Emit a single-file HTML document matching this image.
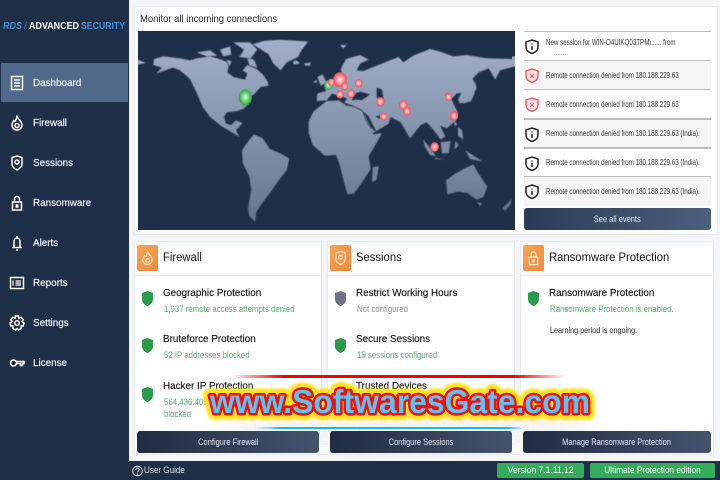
<!DOCTYPE html>
<html><head><meta charset="utf-8">
<style>
*{box-sizing:border-box;margin:0;padding:0}
html,body{width:720px;height:480px;overflow:hidden;background:#1f2f47;font-family:"Liberation Sans",sans-serif}
.a{position:absolute}
#main{left:129px;top:0;width:591px;height:461px;background:#f3f5f7}
.panel{position:absolute;background:#fff;border:1px solid #e8ebee}
.nav{position:absolute;left:33px;color:#eef2f6;font-size:10.5px;line-height:14px;white-space:nowrap;transform:scaleX(.94);transform-origin:left;-webkit-text-stroke:.2px #eef2f6}
.ni{position:absolute;left:9px;width:16px;height:16px;fill:none;stroke:#fff;stroke-width:1.5}
.ev{position:absolute;left:524px;width:187px;height:29px;border-top:1px solid #bdbdbd;font-size:8px;color:#333;line-height:29px;padding-left:22px;white-space:nowrap;overflow:hidden}
.ev span{display:inline-block;transform:scaleX(.775);transform-origin:left}
.ev svg{position:absolute;left:1px;top:7px;width:14px;height:15px}
.btn{position:absolute;height:22px;border-radius:3px;color:#e3e7ee;font-size:9px;line-height:22px;text-align:center;background:linear-gradient(90deg,#1f2c42,#46536d)}
.btn span{display:inline-block;transform:scaleX(.83)}
.h{position:absolute;font-size:11.5px;color:#111;white-space:nowrap;transform:scaleX(.98);transform-origin:left}
.t{position:absolute;font-size:10.5px;color:#111;white-space:nowrap;line-height:13px;transform:scaleX(.94);transform-origin:left;-webkit-text-stroke:.15px #111}
.s{position:absolute;font-size:9px;color:#5aa674;white-space:nowrap;line-height:12px;transform:scaleX(.87);transform-origin:left}
.ic{position:absolute;width:21px;height:26px;border-radius:2px;background:linear-gradient(135deg,#f9a350,#ef8a3f)}
.ic svg{position:absolute;left:3px;top:5px;width:15px;height:16px;fill:none;stroke:#fde7cf;stroke-width:1.3}
.sh{position:absolute;width:11px;height:15px}
</style></head><body>
<svg width="0" height="0" style="position:absolute"><defs>
<path id="sd" d="M5.5 0 L11 2 V8 C11 12 8 14 5.500 15 C3 14 0 12 0 8 V2 Z"/>
<path id="shp" d="M7 1 L13 3 V8 C13 11.500 10 13.500 7 14.500 C4 13.500 1 11.500 1 8 V3 Z"/>
<radialGradient id="rd"><stop offset="0" stop-color="#ffecec"/><stop offset=".5" stop-color="#ff9499"/><stop offset=".88" stop-color="#f2555f"/><stop offset="1" stop-color="#e8505c" stop-opacity=".5"/></radialGradient>
<radialGradient id="gr"><stop offset="0" stop-color="#e6ffe6"/><stop offset=".5" stop-color="#74d878"/><stop offset=".88" stop-color="#36b04a"/><stop offset="1" stop-color="#36b04a" stop-opacity=".5"/></radialGradient>
<linearGradient id="land" gradientUnits="userSpaceOnUse" x1="0" y1="120" x2="0" y2="660"><stop offset="0" stop-color="#a2afc6"/><stop offset=".5" stop-color="#8593ad"/><stop offset="1" stop-color="#67768f"/></linearGradient>
<filter id="noise" x="0" y="0" width="100%" height="100%"><feTurbulence type="fractalNoise" baseFrequency="1.2" numOctaves="1" seed="4"/><feColorMatrix values="0 0 0 0 .55  0 0 0 0 .55  0 0 0 0 .55  1.6 0 0 0 -.35"/></filter>
<filter id="sm" x="0" y="0" width="100%" height="100%"><feGaussianBlur stdDeviation="1.8"/></filter>
</defs></svg>

<!-- Sidebar -->
<svg class="a" style="left:0;top:16px" width="130" height="18" font-family="Liberation Sans" font-weight="bold" font-size="10.500">
<text x="3" y="13" textLength="19" lengthAdjust="spacingAndGlyphs" fill="#4a90d9" font-style="italic">RDS</text>
<text x="24" y="13" fill="#4a90d9" font-weight="normal">/</text>
<text x="29" y="13" textLength="50" lengthAdjust="spacingAndGlyphs" fill="#fff">ADVANCED</text>
<text x="81" y="13" textLength="44" lengthAdjust="spacingAndGlyphs" fill="#4a90d9">SECURITY</text>
</svg>
<div class="a" style="left:1px;top:63px;width:127px;height:39px;background:#51698a"></div>

<svg class="ni" style="top:75px" viewBox="0 0 16 16"><rect x="2.500" y="1.500" width="11" height="13"/><path d="M5 5h6M5 8h6M5 11h6"/></svg>
<div class="nav" style="top:76px">Dashboard</div>
<svg class="ni" style="top:115px" viewBox="0 0 16 16"><path d="M8 1.500 C9 4 13 6 13 10 A5 5 0 0 1 3 10 C3 8 4 7 5 5.500 C6 7 7 6 8 1.500Z"/><circle cx="8" cy="10.500" r="2"/></svg>
<div class="nav" style="top:116px">Firewall</div>
<svg class="ni" style="top:155px" viewBox="0 0 16 16"><path d="M8 1 L13 2.500 V9 C13 12 10 14 8 15 C6 14 3 12 3 9 V2.500 Z"/><circle cx="8" cy="7" r="2"/></svg>
<div class="nav" style="top:156px">Sessions</div>
<svg class="ni" style="top:195px" viewBox="0 0 16 16"><rect x="3.500" y="7" width="9" height="8"/><path d="M5.500 7 V4 A2.500 2.500 0 0 1 10.500 4 V7"/><rect x="7.300" y="10" width="1.400" height="2" fill="#fff"/></svg>
<div class="nav" style="top:196px">Ransomware</div>
<svg class="ni" style="top:235px" viewBox="0 0 16 16"><path d="M8 1 V3 M5 12 V6.500 A3 3.500 0 0 1 11 6.500 V12 M3 12.500 H13 M7 15 H9"/></svg>
<div class="nav" style="top:236px">Alerts</div>
<svg class="ni" style="top:275px" viewBox="0 0 16 16"><rect x="1.500" y="2.500" width="13" height="11"/><path d="M4 5.500V10.500M6.500 6H12M6.500 8H12M6.500 10H12" stroke-width="1.200"/></svg>
<div class="nav" style="top:276px">Reports</div>
<svg class="ni" style="top:315px" viewBox="0 0 16 16"><path d="M6.500 1 H9.500 L10 3.300 L12.200 2.300 L14.200 4.800 L12.800 6.500 L15 8 L14.200 11 L12.300 10.800 L12 13.500 L9.500 15 L8 13.500 L6.500 15 L4 13.500 L3.700 10.800 L1.800 11 L1 8 L3.200 6.500 L1.800 4.800 L3.800 2.300 L6 3.300 Z"/><circle cx="8" cy="8" r="2.300"/></svg>
<div class="nav" style="top:316px">Settings</div>
<svg class="ni" style="top:355px" viewBox="0 0 16 16"><circle cx="4.500" cy="8" r="3"/><path d="M7.500 6.500 H15 V8.500 H13.500 V10.500 H11.500 V8.500 H7.500"/></svg>
<div class="nav" style="top:356px">License</div>

<!-- Main -->
<div class="a" id="main"></div>
<div class="panel" style="left:134px;top:6px;width:584px;height:229px"></div>
<div class="a" style="left:140px;top:12px;font-size:10.5px;color:#222;line-height:14px;white-space:nowrap;transform:scaleX(.9);transform-origin:left">Monitor all incoming connections</div>

<!-- Map -->
<svg class="a" style="left:138px;top:31px" width="377" height="199" viewBox="24 94 1131 597">
<rect x="24" y="94" width="1131" height="597" fill="#1f2f47"/>
<g fill="url(#land)" filter="url(#sm)">
<path d="M24 180 L48 190 L24 195Z"/>
<path d="M72 178 L100 170 L150 176 L180 182 L200 176 L240 170 L262 176 L290 186 L296 200 L292 218 L310 232 L345 240 L352 222 L338 212 L352 196 L380 208 L398 224 L412 244 L416 258 L392 262 L372 284 L360 292 L354 314 L340 328 L322 334 L290 338 L282 352 L288 372 L304 376 L318 362 L338 370 L318 392 L328 412 L302 396 L272 378 L240 352 L218 322 L200 280 L180 238 L150 212 L128 204 L105 212 L78 222 L96 204 L70 196Z"/>
<path d="M200 158 L240 152 L262 168 L230 170Z M270 150 L300 140 L304 165 L280 170Z M310 128 L360 128 L382 150 L362 176 L328 172 L342 150 Z M290 180 L305 185 L298 200Z M352 176 L372 180 L382 205 L358 196Z"/>
<path d="M368 134 L400 124 L450 120 L534 126 L514 152 L504 172 L470 188 L452 212 L430 192 L416 164 L388 146Z"/>
<path d="M522 192 L542 188 L540 198 L526 198Z M630 136 L650 136 L640 146Z"/>
<path d="M336 452 L352 428 L372 404 L398 416 L420 448 L452 462 L478 476 L470 512 L440 550 L420 580 L398 608 L378 638 L376 666 L358 650 L354 626 L364 570 L358 530 L338 490Z"/>
<path d="M536 364 L552 334 L590 304 L626 302 L650 318 L672 322 L696 334 L712 372 L730 404 L756 400 L736 436 L716 470 L722 508 L696 548 L672 582 L652 584 L640 540 L628 492 L618 466 L584 468 L548 436 L536 400Z"/>
<path d="M728 502 L746 500 L740 540 L726 548Z"/>
<path d="M560 304 L562 282 L588 274 L582 256 L604 252 L618 236 L638 230 L632 208 L648 178 L690 166 L716 180 L690 192 L680 212 L700 214 L780 182 L806 172 L820 188 L850 168 L900 148 L930 156 L970 170 L1010 166 L1070 176 L1154 178 L1154 200 L1110 212 L1096 240 L1076 206 L1046 218 L1028 236 L1040 266 L1020 300 L990 312 L984 300 L994 280 L980 282 L964 298 L984 340 L978 362 L950 386 L930 378 L946 410 L932 420 L910 390 L890 368 L872 376 L840 416 L812 368 L782 352 L776 372 L726 402 L700 336 L694 330 L668 318 L642 308 L656 292 L694 302 L720 284 L690 276 L660 300 L634 290 L606 282 L590 302 Z"/>
<path d="M562 232 L578 224 L590 250 L572 258 Z M560 240 L550 248 L560 250Z M490 184 L500 182 L510 192 L490 194Z"/>
<path d="M1020 276 L1034 280 L1024 304 L1000 312 L998 306Z M1036 244 L1040 270 L1034 268Z M880 420 L906 452 L918 470 L900 466 L884 440Z M932 428 L962 424 L956 460 L936 462Z M976 424 L986 436 L974 450Z M972 362 L982 374 L974 380Z M984 382 L996 392 L1000 420 L984 408Z M1006 452 L1040 474 L1058 486 L1020 478 Z M915 474 L945 480 L915 478Z"/>
<path d="M948 542 L972 524 L1004 506 L1030 494 L1042 516 L1072 562 L1060 592 L1040 600 L1012 580 L984 576 L952 584Z"/>
<path d="M1042 608 L1056 610 L1050 620Z M1116 628 L1146 598 L1140 616 L1126 632Z"/>
</g>
<rect x="1146" y="170" width="9" height="30" fill="url(#land)"/>
<g fill="#1f2f47" filter="url(#sm)"><path d="M740 264 L756 270 L762 308 L748 310 L740 290Z M700 336 L716 350 L740 398 L722 384Z M736 350 L770 344 L770 352 L746 356Z"/><path d="M664 302 L700 296 L716 286 L680 278Z"/></g>
<ellipse cx="596" cy="256" rx="13" ry="15" fill="url(#gr)"/>
<ellipse cx="346" cy="293" rx="20" ry="25" fill="url(#gr)"/>
<g fill="url(#rd)">
<ellipse cx="630" cy="240" rx="21" ry="23"/><ellipse cx="604" cy="248" rx="11" ry="12"/><ellipse cx="644" cy="260" rx="11" ry="12"/><ellipse cx="686" cy="251" rx="12" ry="13"/><ellipse cx="630" cy="284" rx="12" ry="13"/><ellipse cx="663" cy="282" rx="12" ry="13"/><ellipse cx="751" cy="306" rx="13" ry="14"/><ellipse cx="761" cy="351" rx="12" ry="12"/><ellipse cx="820" cy="316" rx="13" ry="15"/><ellipse cx="831" cy="335" rx="12" ry="14"/><ellipse cx="956" cy="292" rx="11" ry="12"/><ellipse cx="972" cy="349" rx="13" ry="15"/><ellipse cx="914" cy="442" rx="13" ry="15"/>
</g>
</svg>

<!-- Events -->
<div class="ev" style="top:31px;height:29px;line-height:10px;padding-top:6px;background:#fff"><span>New session for WIN-O4UIKQ03TPM\...... from</span><br><span style="color:#999;margin-left:8px">........</span><svg viewBox="0 0 14 15" fill="none" stroke="#222" stroke-width="1.500"><use href="#shp"/><path d="M7 4.500v1M7 7v4"/></svg></div>
<div class="ev" style="top:60px;background:#f5f5f5"><span>Remote connection denied from 180.188.229.63</span><svg viewBox="0 0 14 15" fill="#fbe3e3" stroke="#e4606a" stroke-width="1.500"><use href="#shp"/><path d="M5 6l4 4M9 6l-4 4" stroke-width="1.200"/></svg></div>
<div class="ev" style="top:89px;background:#fff"><span>Remote connection denied from 180.188.229.63</span><svg viewBox="0 0 14 15" fill="#fbe3e3" stroke="#e4606a" stroke-width="1.500"><use href="#shp"/><path d="M5 6l4 4M9 6l-4 4" stroke-width="1.200"/></svg></div>
<div class="ev" style="top:118px;background:#f5f5f5;border-top-width:2px;line-height:28px"><span>Remote connection denied from 180.188.229.63 (India).</span><svg viewBox="0 0 14 15" fill="none" stroke="#222" stroke-width="1.500"><use href="#shp"/><path d="M7 4.500v1M7 7v4"/></svg></div>
<div class="ev" style="top:147px;background:#fff;border-top-width:2px;line-height:28px"><span>Remote connection denied from 180.188.229.63 (India).</span><svg viewBox="0 0 14 15" fill="none" stroke="#222" stroke-width="1.500"><use href="#shp"/><path d="M7 4.500v1M7 7v4"/></svg></div>
<div class="ev" style="top:176px;background:#f5f5f5;height:30px;line-height:29px"><span>Remote connection denied from 180.188.229.63 (India).</span><svg viewBox="0 0 14 15" fill="none" stroke="#222" stroke-width="1.500"><use href="#shp"/><path d="M7 4.500v1M7 7v4"/></svg></div>
<div class="btn" style="left:524px;top:208px;width:187px;background:linear-gradient(90deg,#2b3b56,#4c5f7d)"><span>See all events</span></div>

<!-- Cards -->
<div class="panel" style="left:134px;top:241px;width:188px;height:180px"></div>
<div class="panel" style="left:327px;top:241px;width:188px;height:180px"></div>
<div class="panel" style="left:520px;top:241px;width:194px;height:180px"></div>
<div class="panel" style="left:134px;top:275px;width:188px;height:146px;border-bottom:0"></div>
<div class="panel" style="left:327px;top:275px;width:188px;height:146px;border-bottom:0"></div>
<div class="panel" style="left:520px;top:275px;width:194px;height:146px;border-bottom:0"></div>
<div class="panel" style="left:134px;top:421px;width:580px;height:34px;border-top:0"></div>

<div class="ic" style="left:137px;top:245px"><svg viewBox="0 0 16 16"><path d="M8 1.500 C9 4 13 6 13 10 A5 5 0 0 1 3 10 C3 8 4 7 5 5.500 C6 7 7 6 8 1.500Z"/><circle cx="8" cy="10.500" r="2"/></svg></div>
<div class="ic" style="left:330px;top:245px"><svg viewBox="0 0 16 16"><path d="M8 1 L13 2.500 V9 C13 12 10 14 8 15 C6 14 3 12 3 9 V2.500 Z"/><circle cx="8" cy="7" r="2"/></svg></div>
<div class="ic" style="left:523px;top:245px"><svg viewBox="0 0 16 16"><rect x="3.500" y="7" width="9" height="8"/><path d="M5.500 7 V4 A2.500 2.500 0 0 1 10.500 4 V7"/><rect x="7.300" y="10" width="1.400" height="2"/></svg></div>
<div class="h" style="left:163px;top:252px">Firewall</div>
<div class="h" style="left:356px;top:252px">Sessions</div>
<div class="h" style="left:549px;top:252px">Ransomware Protection</div>

<svg class="sh" style="left:142px;top:291px" viewBox="0 0 11 15" fill="#2c9a4b"><use href="#sd"/></svg>
<div class="t" style="left:163px;top:287px">Geographic Protection</div>
<div class="s" style="left:164px;top:303px">1,937 remote access attempts denied</div>
<svg class="sh" style="left:142px;top:338px" viewBox="0 0 11 15" fill="#2c9a4b"><use href="#sd"/></svg>
<div class="t" style="left:163px;top:333px">Bruteforce Protection</div>
<div class="s" style="left:164px;top:349px">52 IP addresses blocked</div>
<svg class="sh" style="left:142px;top:387px" viewBox="0 0 11 15" fill="#2c9a4b"><use href="#sd"/></svg>
<div class="t" style="left:163px;top:380px">Hacker IP Protection</div>
<div class="s" style="left:164px;top:396px">564,436,405</div>
<div class="s" style="left:164px;top:408px">blocked</div>

<svg class="sh" style="left:335px;top:291px" viewBox="0 0 11 15" fill="#6c7386"><use href="#sd"/></svg>
<div class="t" style="left:356px;top:287px">Restrict Working Hours</div>
<div class="s" style="left:357px;top:303px;color:#8b8f95">Not configured</div>
<svg class="sh" style="left:335px;top:338px" viewBox="0 0 11 15" fill="#2c9a4b"><use href="#sd"/></svg>
<div class="t" style="left:356px;top:333px">Secure Sessions</div>
<div class="s" style="left:357px;top:349px">15 sessions configured</div>
<div class="t" style="left:356px;top:380px">Trusted Devices</div>

<svg class="sh" style="left:528px;top:291px" viewBox="0 0 11 15" fill="#2c9a4b"><use href="#sd"/></svg>
<div class="t" style="left:549px;top:287px">Ransomware Protection</div>
<div class="s" style="left:550px;top:303px">Ransomware Protection is enabled.</div>
<div class="a" style="left:550px;top:324px;font-size:8.500px;color:#222;line-height:12px;white-space:nowrap;transform:scaleX(.85);transform-origin:left">Learning period is ongoing.</div>

<!-- Watermark noise: soft edged so no rectangle shows -->
<svg class="a" style="left:208px;top:395px;-webkit-mask-image:radial-gradient(ellipse 50% 50% at 50% 50%,#000 70%,transparent 100%);mask-image:radial-gradient(ellipse 50% 50% at 50% 50%,#000 70%,transparent 100%)" width="404" height="64"><rect width="404" height="64" filter="url(#noise)" opacity=".4"/></svg>

<div class="btn" style="left:137px;top:431px;width:182px"><span>Configure Firewall</span></div>
<div class="btn" style="left:330px;top:431px;width:182px"><span>Configure Sessions</span></div>
<div class="btn" style="left:523px;top:431px;width:188px"><span>Manage Ransomware Protection</span></div>

<!-- Lines -->
<div class="a" style="left:230px;top:375px;width:335px;height:3px;background:linear-gradient(90deg,rgba(255,0,0,0),#f40000 16%,#f40000 85%,rgba(255,0,0,0))"></div>
<div class="a" style="left:255px;top:427px;width:270px;height:2px;background:linear-gradient(90deg,rgba(30,170,240,0),#1fb4f2 10%,#1fb4f2 93%,rgba(30,170,240,0))"></div>

<!-- Watermark text -->
<svg class="a" style="left:200px;top:372px" width="400" height="60">
<text x="200" y="41" text-anchor="middle" textLength="380" lengthAdjust="spacingAndGlyphs" font-family="Liberation Sans" font-weight="bold" font-size="33" fill="none" stroke="#ffe21a" stroke-width="14" stroke-linejoin="round" style="filter:blur(1.200px)">www.SoftwaresGate.com</text>
<text x="200" y="41" text-anchor="middle" textLength="380" lengthAdjust="spacingAndGlyphs" font-family="Liberation Sans" font-weight="bold" font-size="33" fill="#5cc3f0" stroke="#ee1010" stroke-width="5" stroke-linejoin="round" paint-order="stroke">www.SoftwaresGate.com</text>
</svg>

<!-- Footer -->
<svg class="a" style="left:132px;top:465px" width="11" height="12" viewBox="0 0 11 12" fill="none" stroke="#dfe5ec"><circle cx="5.500" cy="6" r="4.800"/><path d="M3.800 4.800 C3.800 2.800 7.200 2.800 7.200 4.800 C7.200 6 5.500 6 5.500 7.500 M5.500 8.600V9.800"/></svg>
<div class="a" style="left:144px;top:464px;font-size:9.500px;color:#dfe5ec;line-height:13px;white-space:nowrap;transform:scaleX(.85);transform-origin:left">User Guide</div>
<div class="a" style="left:497px;top:463px;width:87px;height:15px;background:#33ad5b;border-radius:2px;color:#fff;font-size:9.500px;line-height:15px;text-align:center;white-space:nowrap"><span style="display:inline-block;transform:scaleX(.9)">Version 7.1.11.12</span></div>
<div class="a" style="left:590px;top:463px;width:125px;height:15px;background:#33ad5b;border-radius:2px;color:#fff;font-size:9.500px;line-height:15px;text-align:center;white-space:nowrap"><span style="display:inline-block;transform:scaleX(.87)">Ultimate Protection edition</span></div>
</body></html>
